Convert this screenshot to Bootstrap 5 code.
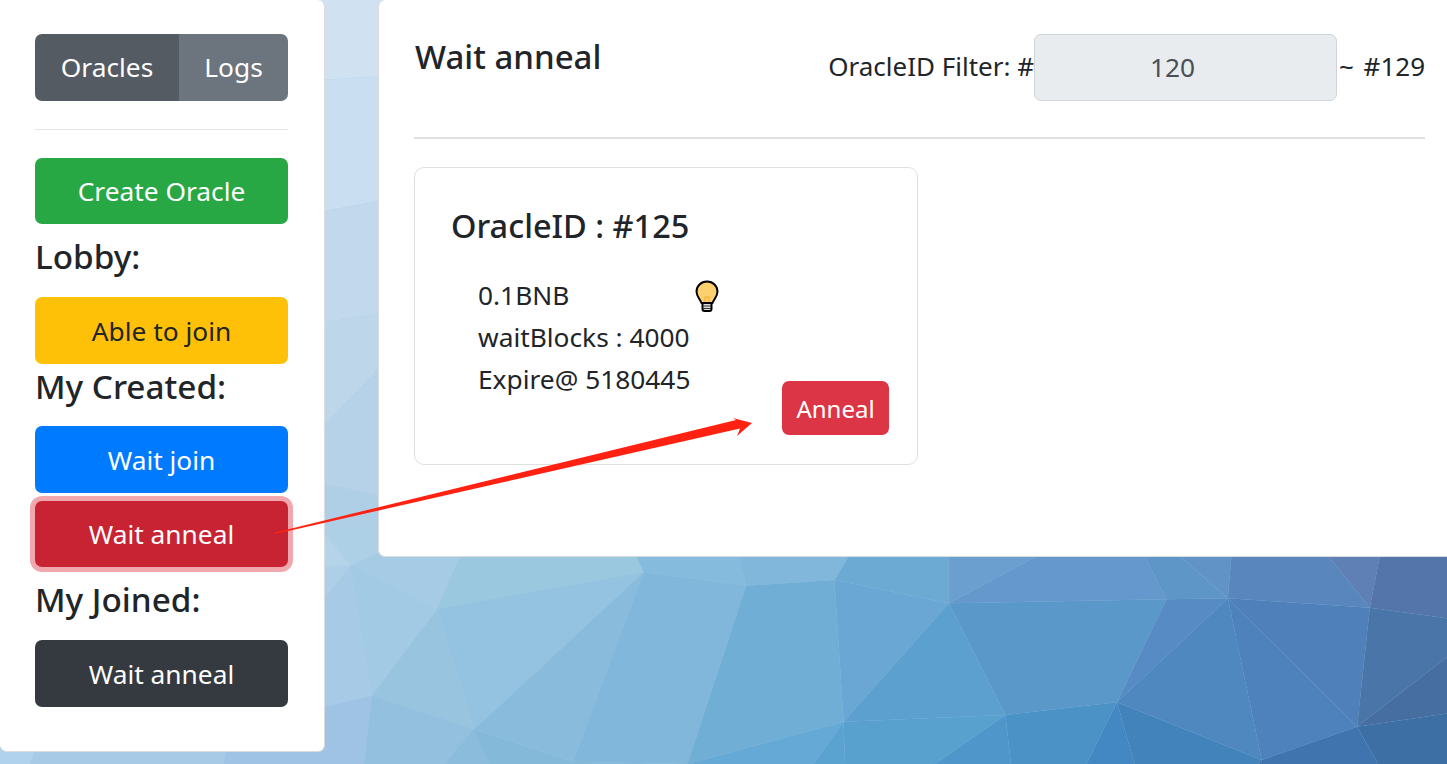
<!DOCTYPE html>
<html lang="en"><head><meta charset="utf-8"><title>Oracles</title>
<link href="https://cdn.jsdelivr.net/npm/bootstrap@5.3.0/dist/css/bootstrap.min.css" rel="stylesheet">
<style>
html,body{height:100%;overflow:hidden}
body{font-family:"Noto Sans","Open Sans","Liberation Sans",sans-serif;font-size:26.3px;line-height:42px;color:#212529;background:#7fb5da}
.poly-bg{position:fixed;left:0;top:0;z-index:-1}
.arrow-over{position:fixed;left:0;top:0;z-index:5;pointer-events:none}
.shell{width:1460px;gap:53px}
.side{width:325px;height:752px;flex:none;padding:34px 36px 0 35px;background:#fff;border:1px solid #dcdcdc;border-width:0 1px 1px 0;border-radius:0 7px 7px 7px}
.main-p{width:1082px;height:557px;flex:none;padding:34px 35px 0;background:#fff;border:1px solid #dcdcdc;border-width:0 0 1px 1px;border-radius:7px 0 0 7px}
.bbtn{height:66.7px;font-size:26.3px;line-height:1;border-radius:7px;border:0;display:flex;align-items:center;justify-content:center;padding:1px 0 0}
.bbtn.seg-a{width:144px;background:#545b62;color:#fff;border-radius:7px 0 0 7px;flex:none;padding:0 0 1px}
.bbtn.seg-b{width:109px;background:#6c757d;color:#fff;border-radius:0 7px 7px 0;flex:none;padding:0 0 1px}
.sep-a{height:1px;margin:28px 0;background:#e6e6e6;opacity:1;border:0}
.sec-h{font-size:33.3px;font-weight:500;line-height:40px;margin:12px 0 21px;color:#212529}
.sec-h.tight{margin:2px 0 20px}
.b-green{background:#28a745;color:#fff}
.b-yellow{background:#ffc107;color:#212529}
.b-blue{background:#007bff;color:#fff}
.b-red{background:#c82333;color:#fff;box-shadow:0 0 0 5px #f1a7ae;margin-top:8px}
.b-dark{background:#343a40;color:#fff}
.top-h{font-size:33px;font-weight:500;line-height:46px;margin:0 0 0 1px}
.filt{font-size:26px}
.filt span{margin-bottom:3px}
.filt .tail-t{word-spacing:3px}
.fake-in{width:303px;height:67px;background:#e9ecef;border:1px solid #ced4da;border-radius:7px;color:#495057;text-align:center;font-size:26.3px;padding:0 26px 2px 0;margin:0 2px 0 0}
.sep-b{height:2px;margin:36px 0 28px;background:#dfdfdf;opacity:1;border:0}
.ocard{width:504px;height:298px;border:1px solid #dfdfdf;border-radius:10px;padding:35px 28px 0 36px;position:relative}
.ocard-t{font-size:32.5px;font-weight:500;line-height:46px;margin:0 0 25px}
.ocard-b{padding-left:27px}
.bulb{position:absolute;left:279px;top:112px}
.bb-an{position:absolute;right:28px;bottom:29px;width:107px;height:54px;background:#dc3545;color:#fff;font-size:24px;line-height:1;border:0;border-radius:7px;padding:1px 0 0}
</style></head>
<body>
<svg class="poly-bg" width="1447" height="764" viewBox="0 0 1447 764">
<rect width="1447" height="764" fill="#a7cbe5"/>
<polygon points="320,0 384,0 384,76 320,80" fill="#d0e1f1"/>
<polygon points="320,80 384,76 384,200 320,212" fill="#c9def1"/>
<polygon points="320,212 384,200 384,313 320,323" fill="#c2d8ed"/>
<polygon points="320,323 384,313 384,363 320,430" fill="#bdd6ea"/>
<polygon points="320,430 384,363 384,497 320,483" fill="#b5d2e8"/>
<polygon points="320,483 384,497 384,560 345,568 320,527" fill="#afcfe6"/>
<polygon points="0,745 37,745 30,764 0,764" fill="#b0d2ec"/>
<polygon points="37,745 227,745 224,764 30,764" fill="#a7cbe6"/>
<polygon points="227,745 320,745 320,764 224,764" fill="#9fc3e5"/>
<g transform="translate(340 540) scale(.7063 .3333)">
<polygon points="170,50 420,50 430,97 137,207" fill="#9ac8df"/>
<polygon points="420,50 565,50 575,137 430,97" fill="#85bbdc"/>
<polygon points="565,50 720,50 700,120 575,137" fill="#80b7da"/>
<polygon points="720,50 862,50 862,190 700,120" fill="#6daad3"/>
<polygon points="862,50 985,50 862,190" fill="#6a9fcf"/>
<polygon points="985,50 1140,50 1170,178 862,190" fill="#6598cc"/>
<polygon points="1140,50 1190,50 1257,175 1170,178" fill="#5f96c8"/>
<polygon points="1190,50 1262,50 1257,175" fill="#6293c7"/>
<polygon points="1262,50 1400,50 1458,203 1257,175" fill="#5986bd"/>
<polygon points="1400,50 1472,50 1458,203" fill="#5e80b5"/>
<polygon points="1472,50 1568,50 1568,235 1458,203" fill="#5475a9"/>
<polygon points="137,207 430,97 190,568" fill="#94c2e1"/>
<polygon points="430,97 330,665 190,568" fill="#89bcdc"/>
<polygon points="430,97 575,137 492,672 330,665" fill="#80b7da"/>
<polygon points="575,137 700,120 713,545 492,672" fill="#70aed6"/>
<polygon points="700,120 862,190 713,545" fill="#6aa7d4"/>
<polygon points="862,190 942,525 713,545" fill="#5ca0cf"/>
<polygon points="862,190 1170,178 1100,487 942,525" fill="#5b98ca"/>
<polygon points="1170,178 1257,175 1100,487" fill="#568cc3"/>
<polygon points="1257,175 1305,660 1100,487" fill="#4f87bf"/>
<polygon points="1257,175 1440,560 1305,660" fill="#4d82bc"/>
<polygon points="1257,175 1458,203 1440,560" fill="#4f80ba"/>
<polygon points="1458,203 1568,235 1568,350 1440,560" fill="#4a75a8"/>
<polygon points="1440,560 1568,350 1568,520" fill="#466ea0"/>
<polygon points="1440,560 1568,520 1568,672 1470,672" fill="#3d6fa5"/>
<polygon points="1440,560 1470,672 1300,672 1305,660" fill="#3f74ae"/>
<polygon points="190,568 330,665 330,672 148,672" fill="#85b9da"/>
<polygon points="330,665 492,672 330,672" fill="#84b9da"/>
<polygon points="492,672 713,545 670,672" fill="#65a9d6"/>
<polygon points="713,545 715,672 670,672" fill="#5aa3d1"/>
<polygon points="713,545 942,525 842,672 715,672" fill="#58a1cf"/>
<polygon points="942,525 950,672 842,672" fill="#4f97cb"/>
<polygon points="942,525 1100,487 1057,672 950,672" fill="#4b92c7"/>
<polygon points="1100,487 1125,672 1057,672" fill="#4388c3"/>
<polygon points="1100,487 1305,660 1300,672 1125,672" fill="#4283bc"/>
</g>
<polygon points="320,527 350.700,565.700 320,566" fill="#b5d4ea"/>
<polygon points="320,566 350.700,565.700 320,605" fill="#adcfe7"/>
<polygon points="345,530 390,530 380,556 350.700,565.700 320,527" fill="#add0e6"/>
<polygon points="320,605 350.700,565.700 372,695.700 320,708" fill="#a7cbe6"/>
<polygon points="350.700,565.700 436.700,609.700 372,695.700" fill="#a3cae5"/>
<polygon points="350.700,565.700 380,552 460,552 436.700,609.700" fill="#a5cbe5"/>
<polygon points="436.700,609.700 474,729 372,695.700" fill="#99c4e0"/>
<polygon points="320,708 372,695.700 364,764 320,764" fill="#9fc3e5"/>
<polygon points="372,695.700 474,729 445,764 364,764" fill="#93c0df"/>
<polygon points="474,729 490,764 445,764" fill="#8bbcdc"/>
</svg>
<div class="shell d-flex align-items-start">
  <aside class="side">
    <div class="d-flex">
      <button class="bbtn seg-a">Oracles</button><button class="bbtn seg-b">Logs</button>
    </div>
    <hr class="sep-a">
    <button class="bbtn b-green w-100">Create Oracle</button>
    <div class="sec-h">Lobby:</div>
    <button class="bbtn b-yellow w-100">Able to join</button>
    <div class="sec-h tight">My Created:</div>
    <button class="bbtn b-blue w-100">Wait join</button>
    <button class="bbtn b-red w-100">Wait anneal</button>
    <div class="sec-h">My Joined:</div>
    <button class="bbtn b-dark w-100">Wait anneal</button>
  </aside>
  <main class="main-p">
    <div class="d-flex justify-content-between align-items-start">
      <h4 class="top-h">Wait anneal</h4>
      <div class="filt d-flex align-items-center"><span>OracleID Filter: #</span><input class="fake-in" value="120" disabled><span class="tail-t">~ #129</span></div>
    </div>
    <hr class="sep-b">
    <div class="ocard">
      <div class="ocard-t">OracleID : #125</div>
      <div class="ocard-b">0.1BNB<br>waitBlocks : 4000<br>Expire@ 5180445</div>
      <svg class="bulb" width="26" height="32" viewBox="0 0 26 32"><path d="M13 1.500C7 1.500 2.500 6 2.500 11.500c0 5 3.500 7.500 5 11.500h11c1.500-4 5-6.500 5-11.500C23.500 6 19 1.500 13 1.500z" fill="#fdd06f" stroke="#000" stroke-width="2"/><path d="M8.500 23h9v6a2 2 0 0 1-2 2h-5a2 2 0 0 1-2-2z" fill="#ddd" stroke="#000" stroke-width="2"/><path d="M9 26h8M9 28.500h8" stroke="#333" stroke-width="1"/><path d="M11 22v-5h4v5" fill="none" stroke="#f0a828" stroke-width="1"/></svg>
      <button class="bb-an">Anneal</button>
    </div>
  </main>
</div>
<svg class="arrow-over" width="1447" height="764" viewBox="0 0 1447 764"><polygon points="275,532.500 736,420 733,418 752,423 737,436 740,428.500 275,534" fill="#ff2212"/></svg>
</body></html>
